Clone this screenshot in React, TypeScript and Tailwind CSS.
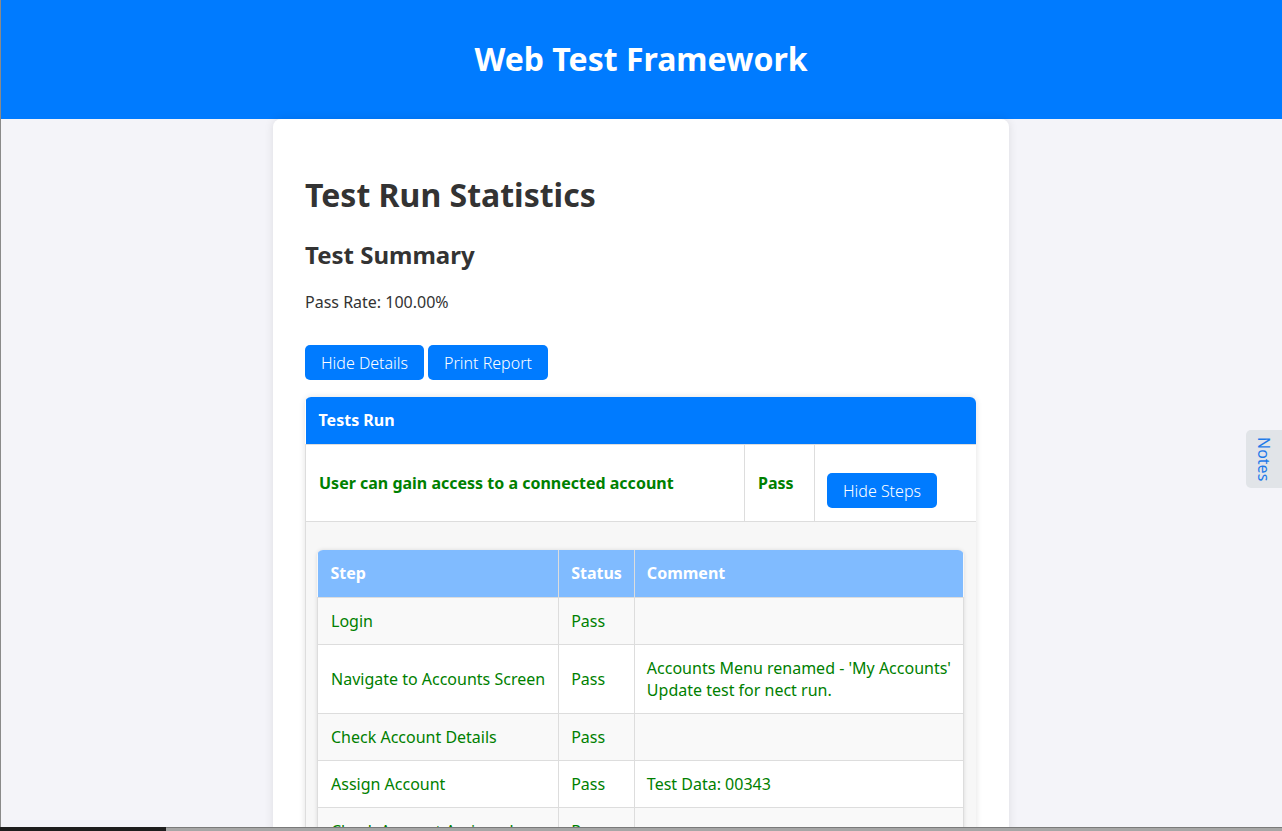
import React from "react";

const steps: { step: string; status: string; comment: React.ReactNode }[] = [
  { step: "Login", status: "Pass", comment: "" },
  {
    step: "Navigate to Accounts Screen",
    status: "Pass",
    comment: (
      <>
        Accounts Menu renamed - 'My Accounts'
        <br />
        Update test for nect run.
      </>
    ),
  },
  { step: "Check Account Details", status: "Pass", comment: "" },
  { step: "Assign Account", status: "Pass", comment: "Test Data: 00343" },
  { step: "Check Account Assigned", status: "Pass", comment: "" },
  { step: "Logout", status: "Pass", comment: "" },
];

export default function App() {
  return (
    <div
      className="relative h-[831px] overflow-hidden bg-[#f4f4f9] text-[#333]"
      style={{ fontFamily: '"Noto Sans", "Open Sans", sans-serif' }}
    >
      <header className="h-[119px] bg-[#007bff] flex items-center justify-center">
        <h1 className="text-white text-[32px] font-bold leading-[44px] -mt-[1px]">
          Web Test Framework
        </h1>
      </header>

      <main className="mx-auto w-[736px] bg-white rounded-lg shadow-[0_0_10px_rgba(0,0,0,0.1)] px-8 pt-8 pb-8">
        <h1 className="mt-[22px] text-[32px] font-bold leading-[44px] text-[#333]">
          Test Run Statistics
        </h1>
        <h2 className="mt-[21px] text-[24px] font-bold leading-[33px] text-[#333]">
          Test Summary
        </h2>
        <p className="mt-[20px] text-[16px] leading-[22px]">Pass Rate: 100.00%</p>

        <div className="mt-[32px] flex gap-1">
          <button className="h-[35px] px-[16px] rounded-[5px] bg-[#007bff] text-white text-[16px] font-light leading-[22px]">
            Hide Details
          </button>
          <button className="h-[35px] px-[16px] rounded-[5px] bg-[#007bff] text-white text-[16px] font-light leading-[22px]">
            Print Report
          </button>
        </div>

        <div className="mt-[17px] w-[671px] rounded-t-[6px] overflow-hidden shadow-[0_0_6px_rgba(0,0,0,0.12)]">
          <table className="w-full border-collapse text-[16px] leading-[22px]">
            <thead>
              <tr>
                <th
                  colSpan={3}
                  className="h-[47px] bg-[#007bff] text-white text-left font-bold px-[13px] align-middle"
                >
                  Tests Run
                </th>
              </tr>
            </thead>
            <tbody>
              <tr>
                <td className="w-[439px] h-[77px] border border-[#ddd] px-[13px] align-middle font-bold text-[#008000]">
                  User can gain access to a connected account
                </td>
                <td className="w-[70px] border border-[#ddd] px-[13px] align-middle font-bold text-[#008000]">
                  Pass
                </td>
                <td className="border border-[#ddd] px-3 align-middle">
                  <button className="mt-4 h-[35px] px-[16px] rounded-[5px] bg-[#007bff] text-white text-[16px] font-light leading-[22px]">
                    Hide Steps
                  </button>
                </td>
              </tr>
              <tr>
                <td colSpan={3} className="bg-[#f7f7f7] border border-[#ddd] pl-[11px] pr-3 pt-[28px] pb-3">
                  <div className="rounded-t-[6px] overflow-hidden shadow-[0_0_4px_rgba(0,0,0,0.12)]">
                    <table className="w-full border-collapse text-[16px] leading-[22px]">
                      <thead>
                        <tr className="bg-[#80bbff] text-white">
                          <th className="w-[240px] h-[48px] text-left font-bold px-[13px] border-r border-[#ddd]">
                            Step
                          </th>
                          <th className="w-[75px] text-left font-bold px-3 border-r border-[#ddd]">
                            Status
                          </th>
                          <th className="text-left font-bold px-3">Comment</th>
                        </tr>
                      </thead>
                      <tbody>
                        {steps.map((s, i) => (
                          <tr key={i} className={i % 2 === 0 ? "bg-[#f9f9f9]" : "bg-white"}>
                            <td className="border border-[#ddd] px-[13px] py-3 text-[#008000] align-middle whitespace-nowrap">
                              {s.step}
                            </td>
                            <td className="border border-[#ddd] px-3 py-3 text-[#008000] align-middle">
                              {s.status}
                            </td>
                            <td className="border border-[#ddd] px-3 py-3 text-[#008000] align-middle whitespace-nowrap">
                              {s.comment}
                            </td>
                          </tr>
                        ))}
                      </tbody>
                    </table>
                  </div>
                </td>
              </tr>
            </tbody>
          </table>
        </div>
      </main>

      <div className="absolute right-0 top-[430px] w-[36px] h-[58px] bg-[#e1e4e8] rounded-l-[5px] flex items-center justify-center">
        <span
          className="text-[#1f7ae8] text-[16px] leading-[18px]"
          style={{ writingMode: "vertical-rl" }}
        >
          Notes
        </span>
      </div>

      <div className="absolute left-0 top-0 bottom-0 w-px bg-[#8a8a8a]" />

      <div className="absolute left-0 right-0 bottom-0 h-[4px] flex">
        <div className="w-[166px] bg-[#1e1e1e]" />
        <div className="flex-1 bg-[#a6a6a6] border-t border-[#7a7a7a]" />
      </div>
    </div>
  );
}
